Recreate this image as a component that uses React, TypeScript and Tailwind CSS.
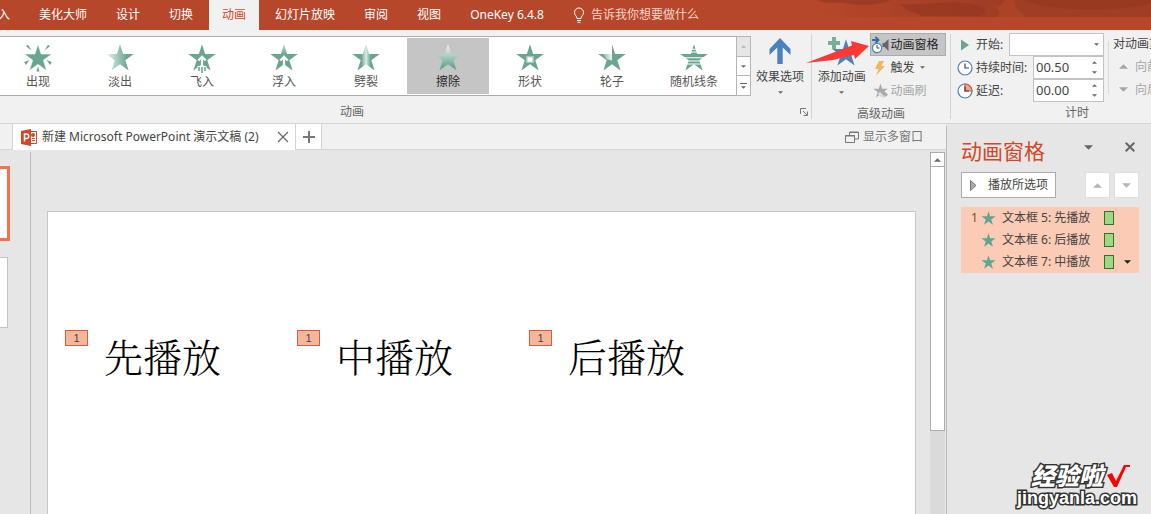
import React from "react";

const STAR =
  "M14 .3 17.1 10.1H27.7L19.3 16.2 22.6 26.6 14 20.3 5.4 26.6 8.7 16.2 .3 10.1H10.9Z";
const TEAL = "#6aa590";

type Effect = { name: string; art: React.ReactNode };

const effects: Effect[] = [
  {
    name: "出现",
    art: (
      <g fill={TEAL}>
        <path d={STAR} stroke="#fff" strokeWidth=".5" />
        <path d="M2 2.200 4 .8 7.500 6.500ZM26 2.200 24 .8 20.500 6.500ZM.2 18 5.500 16 1.800 21ZM27.800 18 22.500 16 26.200 21ZM14 22.500 15.600 27.500H12.400Z" />
      </g>
    ),
  },
  {
    name: "淡出",
    art: (
      <>
        <defs>
          <linearGradient id="fade">
            <stop offset="0" stopColor="#eaf3f0" />
            <stop offset=".75" stopColor={TEAL} />
          </linearGradient>
        </defs>
        <path d={STAR} fill="url(#fade)" />
      </>
    ),
  },
  {
    name: "飞入",
    art: (
      <>
        <path d={STAR} fill={TEAL} />
        <path d="M9.500 22H18.500V28H9.500Z" fill="#fff" />
        <path d="M14 12V23M10.300 16.500 14 12.800 17.700 16.500" stroke="#fff" strokeWidth="2.200" fill="none" />
        <path d="M11 23V27M14 23V29M17 23V27" stroke={TEAL} strokeWidth="1.600" />
      </>
    ),
  },
  {
    name: "浮入",
    art: (
      <>
        <defs>
          <linearGradient id="float" x2="0" y2="1">
            <stop offset="0" stopColor="#b9d6cc" />
            <stop offset=".4" stopColor={TEAL} />
          </linearGradient>
        </defs>
        <path d={STAR} fill="url(#float)" />
        <path d="M14 12.500V23M10.300 16.500 14 12.800 17.700 16.500" stroke="#fff" strokeWidth="2.200" fill="none" />
      </>
    ),
  },
  {
    name: "劈裂",
    art: (
      <>
        <defs>
          <linearGradient id="split">
            <stop offset=".33" stopColor={TEAL} />
            <stop offset=".5" stopColor="#dcebe6" />
            <stop offset=".67" stopColor={TEAL} />
          </linearGradient>
        </defs>
        <path d={STAR} fill="url(#split)" />
      </>
    ),
  },
  {
    name: "擦除",
    art: (
      <>
        <defs>
          <linearGradient id="wipe" x2="0" y2="1">
            <stop offset="0" stopColor="#f4faf8" />
            <stop offset=".85" stopColor={TEAL} />
          </linearGradient>
        </defs>
        <path d={STAR} fill="url(#wipe)" />
      </>
    ),
  },
  {
    name: "形状",
    art: (
      <>
        <path d={STAR} fill={TEAL} />
        <path d="M10 12H18V19H10Z" fill="#a5c9bc" />
        <path d="M11.500 13.300H16.500V17.700H11.500Z" fill="#fff" />
      </>
    ),
  },
  {
    name: "轮子",
    art: (
      <>
        <defs>
          <linearGradient id="wheel">
            <stop offset="0" stopColor="#8fbcac" />
            <stop offset="1" stopColor="#eef6f3" />
          </linearGradient>
        </defs>
        <path d={STAR} fill={TEAL} />
        <path d="M10 0H14V12H10Z" fill="#fff" />
        <path d="M5 10.100H14V16.500L8.700 15.300Z" fill="url(#wheel)" />
      </>
    ),
  },
  {
    name: "随机线条",
    art: (
      <>
        <path d={STAR} fill={TEAL} />
        <path d="M0 5.200H28M0 8H28M0 13.800H28M0 17H28M0 20H28" stroke="#fff" strokeWidth="1.100" />
      </>
    ),
  },
];

function Star({ className }: { className: string }) {
  return (
    <svg viewBox="0 0 28 27" className={className} aria-hidden="true">
      <path d={STAR} fill="currentColor" />
    </svg>
  );
}

function Caret({ up = false, className = "" }: { up?: boolean; className?: string }) {
  return (
    <svg viewBox="0 0 10 5" className={className} aria-hidden="true">
      <path d={up ? "M0 5 5 0 10 5Z" : "M0 0H10L5 5Z"} fill="currentColor" />
    </svg>
  );
}

const tabs = ["插入", "美化大师", "设计", "切换", "动画", "幻灯片放映", "审阅", "视图", "OneKey 6.4.8"];

function Header() {
  return (
    <header className="relative h-[30px] shrink-0 overflow-hidden bg-[#b7472a] text-white">
      <svg
        viewBox="0 0 340 17"
        className="absolute top-0 right-0 h-[17px] w-[340px]"
        aria-hidden="true"
      >
        <defs>
          <linearGradient id="swirl">
            <stop offset="0" stopColor="#a03e25" stopOpacity="0" />
            <stop offset=".5" stopColor="#a03e25" />
          </linearGradient>
        </defs>
        <path d="M0 0H340V17H0Z" fill="url(#swirl)" />
        <path d="M6 0H80C66 6 46 6 34 3 24 1 16 5 6 0ZM90 4C110 6 132 0 160 4 180 7 176 14 168 16H112C102 12 92 10 90 4Z" fill="#963822" opacity=".7" />
        <path d="M178 4C186 8 190 6 194 0H204C202 8 210 10 214 17H186C192 12 186 8 178 4Z" fill="#b7472a" opacity=".5" />
        <path d="M214 0C230 12 320 12 340 3V0Z" fill="#933720" opacity=".6" />
      </svg>
      <nav className="relative -ml-[27px] flex h-full gap-[3px]">
        {tabs.map((t) => (
          <button
            key={t}
            className={
              t === "动画"
                ? "shrink-0 bg-[#f1f1f1] px-[13px] text-[#d24726]"
                : "shrink-0 px-[13px]"
            }
          >
            {t}
          </button>
        ))}
        <button className="flex shrink-0 items-center gap-1.5 px-[13px] text-[#f6d5cb]">
          <svg viewBox="0 0 12 16" className="h-4 w-3" fill="none" stroke="#fff" aria-hidden="true">
            <path d="M4 11.500C4 9 1.500 8.500 1.500 5.500A4.500 4.500 0 0 1 10.500 5.500C10.500 8.500 8 9 8 11.500ZM4 13.500H8M4.500 15.300H7.500" />
          </svg>
          告诉我你想要做什么
        </button>
      </nav>
    </header>
  );
}

function Gallery() {
  return (
    <div className="flex h-[60px]">
      <div className="flex w-[736px] overflow-hidden border-y border-[#ababab] bg-white py-px">
        <div className="-ml-[3px] flex">
          {effects.map((e) => (
            <button
              key={e.name}
              className={
                e.name === "擦除"
                  ? "flex w-[82px] shrink-0 flex-col items-center bg-[#c5c5c5] pt-1.5 text-[#262626]"
                  : "flex w-[82px] shrink-0 flex-col items-center pt-1.5 text-[#555]"
              }
            >
              <svg viewBox="0 0 28 29" className="h-[29px] w-7" aria-hidden="true">
                {e.art}
              </svg>
              <span className="leading-[18px]">{e.name}</span>
            </button>
          ))}
        </div>
      </div>
      <div className="flex w-[15px] flex-col divide-y divide-[#b5b5b5] border border-[#b5b5b5] bg-white text-[#666]">
        <button aria-label="上一行" className="flex flex-1 items-center justify-center bg-[#e6e6e6] text-[#b5b5b5]">
          <Caret up className="h-[3px] w-[5px]" />
        </button>
        <button aria-label="下一行" className="flex flex-1 items-center justify-center">
          <Caret className="h-[3px] w-[5px]" />
        </button>
        <button aria-label="其他" className="flex flex-1 flex-col items-center justify-center gap-0.5">
          <span className="h-px w-[7px] bg-[#666]" />
          <Caret className="h-[3px] w-[5px]" />
        </button>
      </div>
    </div>
  );
}

function Spinner({ id, value }: { id: string; value: string }) {
  return (
    <div className="flex h-[23px] w-[71px] border border-[#c3c3c3] bg-white">
      <input id={id} defaultValue={value} className="w-full min-w-0 pl-0.5 text-[13px] text-[#444] outline-none" />
      <div className="flex w-[11px] shrink-0 flex-col text-[#666]">
        <button aria-label="增加" className="flex flex-1 items-center">
          <Caret up className="h-[3px] w-[5px]" />
        </button>
        <button aria-label="减少" className="flex flex-1 items-center">
          <Caret className="h-[3px] w-[5px]" />
        </button>
      </div>
    </div>
  );
}

function Clock({ late = false }: { late?: boolean }) {
  return (
    <svg viewBox="0 0 16 16" className="h-4 w-4 shrink-0" fill="none" aria-hidden="true">
      <circle cx="8" cy="8" r="7" fill="#fff" stroke="#4a7ebb" strokeWidth="1.200" />
      {late && <path d="M8 8V1A7 7 0 0 1 15 8Z" fill="#f0a58f" stroke="#d9593c" strokeWidth="1.200" />}
      <path d="M8 3.500V8H12" stroke="#444" strokeWidth="1.200" />
    </svg>
  );
}

function Ribbon() {
  return (
    <div className="flex h-[94px] shrink-0 overflow-hidden border-b border-[#d4d4d4] bg-[#f1f1f1] text-[#444]">
      <section className="flex shrink-0 flex-col">
        <div className="flex pt-1.5">
          <Gallery />
          <button className="flex w-[60px] flex-col items-center pr-0.5">
            <svg viewBox="0 0 22 28" className="mt-0.5 h-7 w-[22px]" aria-hidden="true">
              <path d="M11 0 21.500 11V17L13.700 9.500V26H8.300V9.500L.5 17V11Z" fill="#4a82bd" />
            </svg>
            <span className="mt-0.5 leading-[18px]">效果选项</span>
            <Caret className="mt-[5px] h-[3px] w-[5px] text-[#666]" />
          </button>
        </div>
        <div className="flex items-center pt-[7px] text-[#666]">
          <span className="flex-1 pr-[108px] text-center leading-[18px]">动画</span>
          <button aria-label="动画选项" className="-ml-3 mr-[3px]">
            <svg viewBox="0 0 8 8" className="h-2 w-2" fill="none" stroke="#777" aria-hidden="true">
              <path d="M.5 6V.5H6M3 3 7 7M7.500 3.500V7.500H3.500" />
            </svg>
          </button>
        </div>
      </section>

      <section className="my-1 flex w-[140px] shrink-0 flex-col border-x border-[#d4d4d4]">
        <div className="flex justify-between pr-1">
          <button className="flex w-[58px] flex-col items-center pl-0.5">
            <svg viewBox="0 0 28 29" className="mt-[3px] h-[29px] w-7" aria-hidden="true">
              <path d={STAR} fill="#4a82bd" transform="translate(4 2)" />
              <path d="M4 0H8V4H12V8H8V12H4V8H0V4H4Z" fill="#7aae9b" />
            </svg>
            <span className="mt-0.5 leading-[18px]">添加动画</span>
            <Caret className="mt-[5px] h-[3px] w-[5px] text-[#666]" />
          </button>
          <div className="flex w-[77px] flex-col">
            <button className="-mt-px flex h-[23px] items-center gap-0.5 border border-[#ababab] bg-[#c5c5c5] text-[#262626]">
              <svg viewBox="0 0 18 18" className="h-[18px] w-[18px] shrink-0" aria-hidden="true">
                <path d="M1 4H7M4.500 1 7.500 4 4.500 7" stroke="#2e6da8" strokeWidth="1.800" fill="none" />
                <circle cx="6" cy="12" r="4.600" fill="#fff" stroke="#4a82bd" strokeWidth="1.200" />
                <path d="M6 9V12H8.500" stroke="#444" fill="none" />
                <path d="M17.500 3V15L13.500 11H11.500V7H13.500Z" fill="#666" />
              </svg>
              <span className="whitespace-nowrap">动画窗格</span>
            </button>
            <button className="flex h-[23px] items-center gap-[5px] pl-1">
              <svg viewBox="0 0 12 16" className="h-4 w-3" aria-hidden="true">
                <path d="M5 1H10L7.500 6H11L2 15.500 4.500 9H1Z" fill="#efb85a" />
              </svg>
              <span>触发</span>
              <Caret className="h-[3px] w-[5px] text-[#666]" />
            </button>
            <button disabled className="flex h-[23px] items-center gap-[3px] pl-[3px] text-[#a6a6a6]">
              <svg viewBox="0 0 28 27" className="h-[15px] w-[15px] shrink-0" aria-hidden="true">
                <path d={STAR} fill="#aaa" />
                <path d="M20 14 28 21 24 25 16 18Z" fill="#aaa" />
                <path d="M13 16 21 24 17 28 9 20Z" fill="#dcdcdc" />
              </svg>
              动画刷
            </button>
          </div>
        </div>
        <span className="pt-[3px] text-center leading-[18px] text-[#666]">高级动画</span>
      </section>

      <section className="flex w-[252px] shrink-0 flex-col pt-[3px]">
        <div className="flex">
          <div className="w-[153px] shrink-0 pl-1.5">
            <div className="flex h-[23px] items-center">
              <svg viewBox="0 0 10 12" className="mr-1.5 ml-1 h-3 w-[9px]" aria-hidden="true">
                <path d="M0 0 9 6 0 12Z" fill="#6aa590" />
              </svg>
              <label htmlFor="start" className="flex-1">开始:</label>
              <div className="relative flex h-[23px] w-[95px] items-center border border-[#c3c3c3] bg-white">
                <select id="start" className="h-full w-full appearance-none outline-none">
                  <option></option>
                </select>
                <Caret className="pointer-events-none absolute right-1 h-[3px] w-[5px] text-[#666]" />
              </div>
            </div>
            <div className="flex h-[23px] items-center">
              <Clock />
              <label htmlFor="duration" className="flex-1 pl-[3px] whitespace-nowrap">持续时间:</label>
              <Spinner id="duration" value="00.50" />
            </div>
            <div className="flex h-[23px] items-center">
              <Clock late />
              <label htmlFor="delay" className="flex-1 pl-[3px]">延迟:</label>
              <Spinner id="delay" value="00.00" />
            </div>
          </div>
          <div className="my-2 ml-1 border-l border-[#dadada]" />
          <div className="-my-px flex flex-col whitespace-nowrap">
            <span className="pl-1 leading-[23px]">对动画重新排序</span>
            <button disabled className="flex h-[23px] items-center gap-[7px] pl-2.5 text-[#a6a6a6]">
              <Caret up className="h-[5px] w-[9px]" />
              向前移动
            </button>
            <button disabled className="flex h-[23px] items-center gap-[7px] pl-2.5 text-[#a6a6a6]">
              <Caret className="h-[5px] w-[9px]" />
              向后移动
            </button>
          </div>
        </div>
        <span className="pt-0.5 text-center leading-[18px] text-[#666]">计时</span>
      </section>

      <svg viewBox="0 0 64 26" className="pointer-events-none absolute top-10 left-[806px] h-[26px] w-16" aria-hidden="true">
        <path d="M0 23 46 5.500 45 1 63 6 49 19 48 15 27 20Z" fill="#fb3a36" />
      </svg>
    </div>
  );
}

function DocumentBar() {
  return (
    <div className="flex h-[26px] shrink-0 border-b border-[#d4d4d4] bg-[#f1f1f1] text-[#444]">
      <div className="w-[13px] shrink-0 border-r border-[#d4d4d4]" />
      <div className="-mb-px flex w-[282px] shrink-0 items-center bg-white pl-2">
        <svg viewBox="0 0 17 17" className="h-[17px] w-[17px] shrink-0" aria-hidden="true">
          <path d="M9 2.500H15.500V14.500H9Z" fill="#fff" stroke="#d24726" />
          <path d="M11 9.500H14M11 11.500H14" stroke="#d24726" />
          <circle cx="12" cy="6" r="2" fill="#d24726" />
          <path d="M0 2 10 0V17L0 15Z" fill="#d24726" />
          <path d="M3.500 12.500V5H5.500A2.200 2.200 0 0 1 5.500 9.500H3.500" fill="none" stroke="#fff" strokeWidth="1.500" />
        </svg>
        <span className="flex-1 pl-1 whitespace-nowrap">新建 Microsoft PowerPoint 演示文稿 (2)</span>
        <button aria-label="关闭文档" className="pr-1.5">
          <svg viewBox="0 0 12 12" className="h-3 w-3" stroke="#666" strokeWidth="1.200" aria-hidden="true">
            <path d="M1 1 11 11M11 1 1 11" />
          </svg>
        </button>
      </div>
      <button
        aria-label="新建文档"
        className="flex w-[27px] shrink-0 items-center justify-center border-x border-[#d4d4d4] bg-white"
      >
        <svg viewBox="0 0 12 12" className="h-3 w-3" stroke="#777" strokeWidth="2" aria-hidden="true">
          <path d="M6 0V12M0 6H12" />
        </svg>
      </button>
      <button className="ml-auto flex items-center gap-1 pr-[23px] text-[#777]">
        <svg viewBox="0 0 14 12" className="h-3 w-3.5" fill="none" stroke="#777" aria-hidden="true">
          <path d="M4.500 4V1H13.500V8H10M4 1.500H14M.5 4.500H9.500V11.500H.5ZM0 5H10" />
        </svg>
        显示多窗口
      </button>
    </div>
  );
}

function Workspace() {
  return (
    <div className="flex min-h-0 flex-1">
      <div className="mt-0.5 flex w-[31px] shrink-0 flex-col border-r border-[#bbb] pt-3.5">
        <div className="h-[75px] w-2.5 border-y-[3px] border-r-[3px] border-[#f4714e] bg-white" />
        <div className="mt-4 h-[71px] w-2 border-y border-r border-[#c3c3c3] bg-white" />
      </div>
      <div className="flex min-w-0 flex-1 pt-[61px] pr-3.5 pl-4">
        <div className="flex flex-1 border border-b-0 border-[#c6c6c6] bg-white pt-[118px] pl-[17px] text-black">
          {["先播放", "中播放", "后播放"].map((t) => (
            <div key={t} className="flex w-[232px] shrink-0 items-start gap-4">
              <span className="flex h-4 w-[23px] items-center justify-center border border-[#dc5b3d] bg-[#f5b79c] font-['Liberation_Sans',sans-serif] text-[11px] text-[#444]">
                1
              </span>
              <span className="font-['SimSun','Noto_Serif_CJK_SC','Noto_Sans_CJK_SC',serif] text-[39px] leading-[50px] font-light">
                {t}
              </span>
            </div>
          ))}
        </div>
      </div>
      <div className="mt-0.5 mr-px flex w-[15px] shrink-0 flex-col bg-[#dadada]">
        <button
          aria-label="向上滚动"
          className="flex h-[15px] items-center justify-center border border-[#ababab] bg-white text-[#666]"
        >
          <Caret up className="h-1 w-[7px]" />
        </button>
        <div className="-mt-px h-[265px] border border-[#ababab] bg-white" />
      </div>
    </div>
  );
}

const steps = [
  { n: "1", label: "文本框 5: 先播放" },
  { n: "", label: "文本框 6: 后播放" },
  { n: "", label: "文本框 7: 中播放" },
];

function AnimationPane() {
  return (
    <aside className="relative mt-0.5 flex w-[205px] shrink-0 flex-col border-l border-[#bbb] pr-3 pl-3.5 text-[#444]">
      <div className="flex h-[46px] items-center pt-1">
        <h2 className="flex-1 text-[21px] leading-7 text-[#d24726]">动画窗格</h2>
        <button aria-label="窗格选项" className="mr-8 pb-2">
          <Caret className="h-[5px] w-[9px] text-[#666]" />
        </button>
        <button aria-label="关闭窗格" className="mr-1 pb-2">
          <svg viewBox="0 0 10 10" className="h-2.5 w-2.5" stroke="#666" strokeWidth="2" aria-hidden="true">
            <path d="M.7.7 9.300 9.300M9.300.7.7 9.300" />
          </svg>
        </button>
      </div>
      <div className="flex h-[26px] gap-1">
        <button className="flex w-[95px] items-center gap-[11px] border border-[#ababab] bg-white pl-2">
          <svg viewBox="0 0 7 11" className="h-[11px] w-[7px] shrink-0" aria-hidden="true">
            <path d="M.5.5 6 5.500.5 10.500Z" fill="#aaa" stroke="#777" />
          </svg>
          播放所选项
        </button>
        <button
          aria-label="上移"
          className="ml-auto flex w-[25px] items-center justify-center border border-[#dfdfdf] bg-white text-[#b5b5b5]"
        >
          <Caret up className="h-[5px] w-[9px]" />
        </button>
        <button
          aria-label="下移"
          className="flex w-[25px] items-center justify-center border border-[#dfdfdf] bg-white text-[#b5b5b5]"
        >
          <Caret className="h-[5px] w-[9px]" />
        </button>
      </div>
      <ol className="mt-[9px] bg-[#fbcbb5]">
        {steps.map((s, i) => (
          <li key={s.label} className="flex h-[22px] items-center">
            <span className="w-5 shrink-0 pl-2.5 text-[#7a4a35]">{s.n}</span>
            <Star className="h-3.5 w-[15px] shrink-0 text-[#5fa58f]" />
            <span className="flex-1 pl-1.5 whitespace-nowrap">{s.label}</span>
            <span className="h-3.5 w-2.5 shrink-0 border border-[#3b6e2b] bg-[#9bd984]" />
            <span className="flex w-[25px] shrink-0 pl-2.5">
              {i === 2 && (
                <button aria-label="更多选项">
                  <Caret className="h-1 w-[7px] text-[#222]" />
                </button>
              )}
            </span>
          </li>
        ))}
      </ol>
      <div className="absolute right-3.5 bottom-1.5 flex flex-col items-end font-black text-white">
        <div className="flex items-center gap-1 pr-1.5">
          <span className="text-2xl leading-6 italic [-webkit-text-stroke:3px_#333] [paint-order:stroke_fill]">
            经验啦
          </span>
          <svg viewBox="0 0 24 24" className="h-6 w-6" aria-hidden="true">
            <path d="M0 11 5 9 9 17 17 1H23V3H19L10 23H7Z" fill="#f00" />
          </svg>
        </div>
        <span className="font-['Liberation_Sans',sans-serif] text-lg leading-5 [-webkit-text-stroke:3px_#333] [paint-order:stroke_fill]">
          jingyanla.com
        </span>
      </div>
    </aside>
  );
}

export default function App() {
  return (
    <div className="relative flex h-screen flex-col overflow-hidden bg-[#e6e6e6] font-['Noto_Sans','Noto_Sans_CJK_SC',sans-serif] text-xs">
      <Header />
      <Ribbon />
      <div className="flex min-h-0 flex-1">
        <main className="flex min-w-0 flex-1 flex-col">
          <DocumentBar />
          <Workspace />
        </main>
        <AnimationPane />
      </div>
    </div>
  );
}
